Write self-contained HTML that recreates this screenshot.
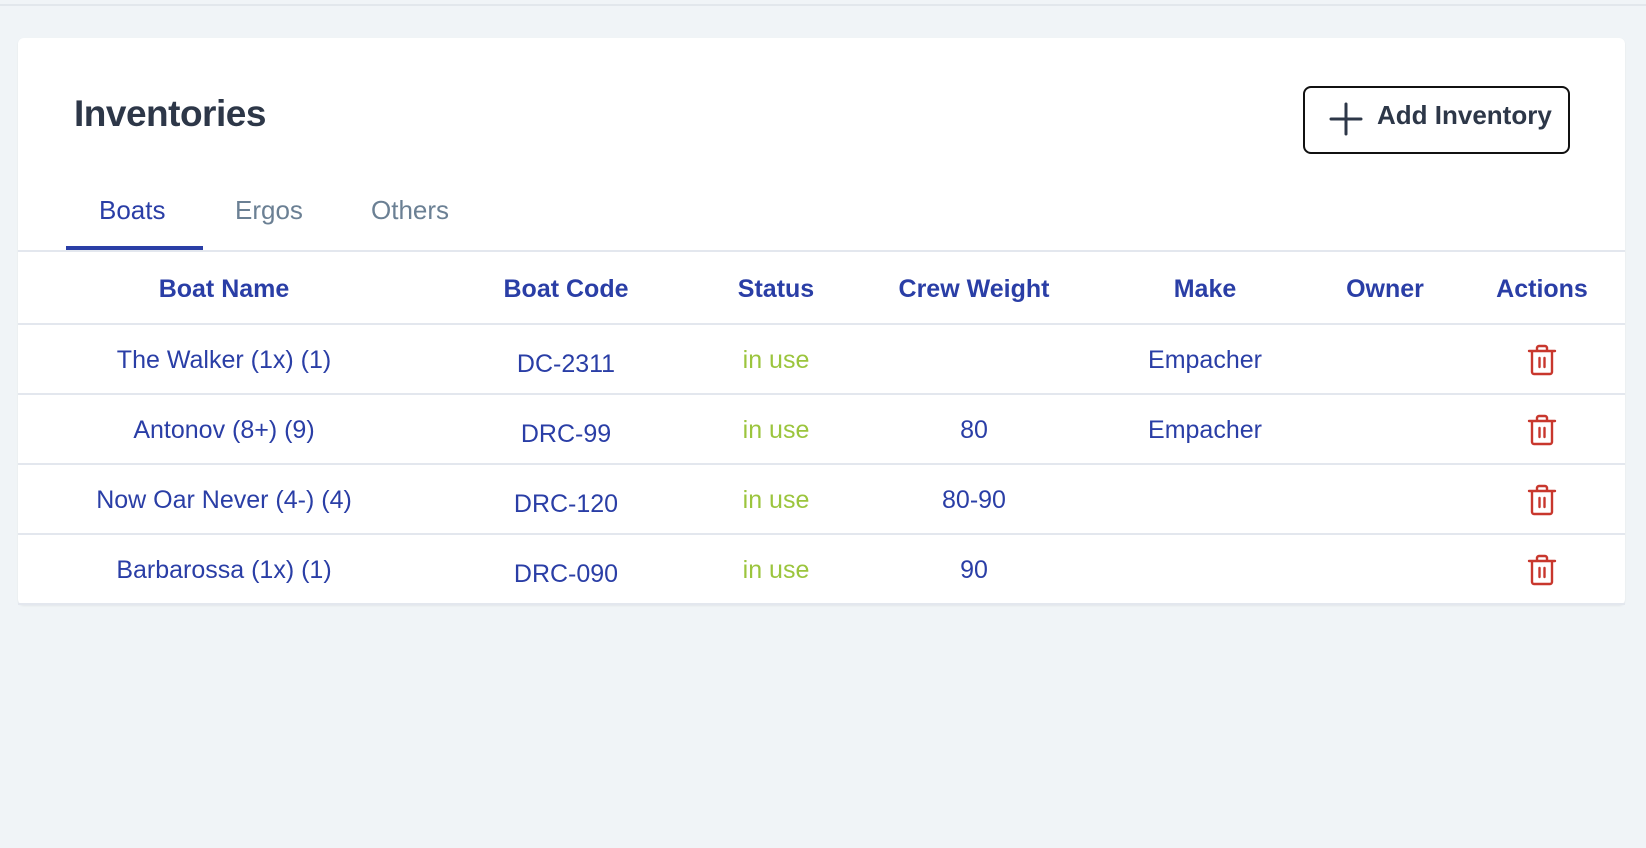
<!DOCTYPE html>
<html><head><meta charset="utf-8"><style>
*{margin:0;padding:0;box-sizing:border-box}
body{width:1646px;height:848px;background:#f0f4f7;font-family:"Liberation Sans",sans-serif;position:relative;overflow:hidden}
.topline{position:absolute;left:0;top:4px;width:1646px;height:2px;background:#e2e7ec}
.card{position:absolute;left:18px;top:38px;width:1607px;height:567px;background:#fff;border-radius:6px;box-shadow:0 1px 2px rgba(0,0,0,.06)}
h1{position:absolute;left:56px;top:55px;font-size:37px;font-weight:bold;color:#2d3748;letter-spacing:-0.5px}
.btn{position:absolute;left:1285px;top:48px;width:267px;height:68px;border:2px solid #111;border-radius:8px}
.btn .lbl{position:absolute;left:72px;top:12px;font-size:26px;font-weight:bold;color:#2d3748}
.tab{position:absolute;top:157px;font-size:26px;color:#6b8094}
.line{position:absolute;left:0;width:1607px;height:2px;background:#e3e7ee}
.c{position:absolute;width:300px;margin-left:-150px;text-align:center;font-size:25px;color:#2a3ea6}
.h{font-weight:bold}
.g{color:#9bc53d}
</style></head><body>
<div class="topline"></div>
<div class="card">
<h1>Inventories</h1>
<div class="btn">
<svg style="position:absolute;left:24px;top:14px" width="34" height="34" viewBox="0 0 34 34"><path d="M17 2v30M2 17h30" stroke="#2d3748" stroke-width="3" stroke-linecap="round"/></svg>
<span class="lbl">Add Inventory</span></div>
<div class="tab" style="left:81px;color:#2a3ea6">Boats</div>
<div class="tab" style="left:217px">Ergos</div>
<div class="tab" style="left:353px">Others</div>
<div style="position:absolute;left:48px;top:208px;width:137px;height:4px;background:#2a3ea6"></div>
<div class="line" style="top:212px"></div>

<div class="c h" style="left:206px;top:237px">Boat Name</div>
<div class="c h" style="left:548px;top:237px">Boat Code</div>
<div class="c h" style="left:758px;top:237px">Status</div>
<div class="c h" style="left:956px;top:237px">Crew Weight</div>
<div class="c h" style="left:1187px;top:237px">Make</div>
<div class="c h" style="left:1367px;top:237px">Owner</div>
<div class="c h" style="left:1524px;top:237px">Actions</div>
<div class="line" style="top:285px"></div>

<div class="c" style="left:206px;top:308px">The Walker (1x) (1)</div>
<div class="c" style="left:548px;top:312px">DC-2311</div>
<div class="c g" style="left:758px;top:308px">in use</div>
<div class="c" style="left:1187px;top:308px">Empacher</div>
<div class="line" style="top:355px"></div>

<div class="c" style="left:206px;top:378px">Antonov (8+) (9)</div>
<div class="c" style="left:548px;top:382px">DRC-99</div>
<div class="c g" style="left:758px;top:378px">in use</div>
<div class="c" style="left:956px;top:378px">80</div>
<div class="c" style="left:1187px;top:378px">Empacher</div>
<div class="line" style="top:425px"></div>

<div class="c" style="left:206px;top:448px">Now Oar Never (4-) (4)</div>
<div class="c" style="left:548px;top:452px">DRC-120</div>
<div class="c g" style="left:758px;top:448px">in use</div>
<div class="c" style="left:956px;top:448px">80-90</div>
<div class="line" style="top:495px"></div>

<div class="c" style="left:206px;top:518px">Barbarossa (1x) (1)</div>
<div class="c" style="left:548px;top:522px">DRC-090</div>
<div class="c g" style="left:758px;top:518px">in use</div>
<div class="c" style="left:956px;top:518px">90</div>
<div class="line" style="top:565px"></div>

<svg style="position:absolute;left:1509px;top:306px" width="30" height="32" viewBox="0 0 30 32"><g fill="none" stroke="#c8372d" stroke-width="2.4" stroke-linecap="round" stroke-linejoin="round"><path d="M2 7h26M10 7V4a2 2 0 0 1 2-2h6a2 2 0 0 1 2 2v3M5 7v21a2 2 0 0 0 2 2h16a2 2 0 0 0 2-2V7M12.5 14v9M17.5 14v9"/></g></svg>
<svg style="position:absolute;left:1509px;top:376px" width="30" height="32" viewBox="0 0 30 32"><g fill="none" stroke="#c8372d" stroke-width="2.4" stroke-linecap="round" stroke-linejoin="round"><path d="M2 7h26M10 7V4a2 2 0 0 1 2-2h6a2 2 0 0 1 2 2v3M5 7v21a2 2 0 0 0 2 2h16a2 2 0 0 0 2-2V7M12.5 14v9M17.5 14v9"/></g></svg>
<svg style="position:absolute;left:1509px;top:446px" width="30" height="32" viewBox="0 0 30 32"><g fill="none" stroke="#c8372d" stroke-width="2.4" stroke-linecap="round" stroke-linejoin="round"><path d="M2 7h26M10 7V4a2 2 0 0 1 2-2h6a2 2 0 0 1 2 2v3M5 7v21a2 2 0 0 0 2 2h16a2 2 0 0 0 2-2V7M12.5 14v9M17.5 14v9"/></g></svg>
<svg style="position:absolute;left:1509px;top:516px" width="30" height="32" viewBox="0 0 30 32"><g fill="none" stroke="#c8372d" stroke-width="2.4" stroke-linecap="round" stroke-linejoin="round"><path d="M2 7h26M10 7V4a2 2 0 0 1 2-2h6a2 2 0 0 1 2 2v3M5 7v21a2 2 0 0 0 2 2h16a2 2 0 0 0 2-2V7M12.5 14v9M17.5 14v9"/></g></svg>
</div>
</body></html>
